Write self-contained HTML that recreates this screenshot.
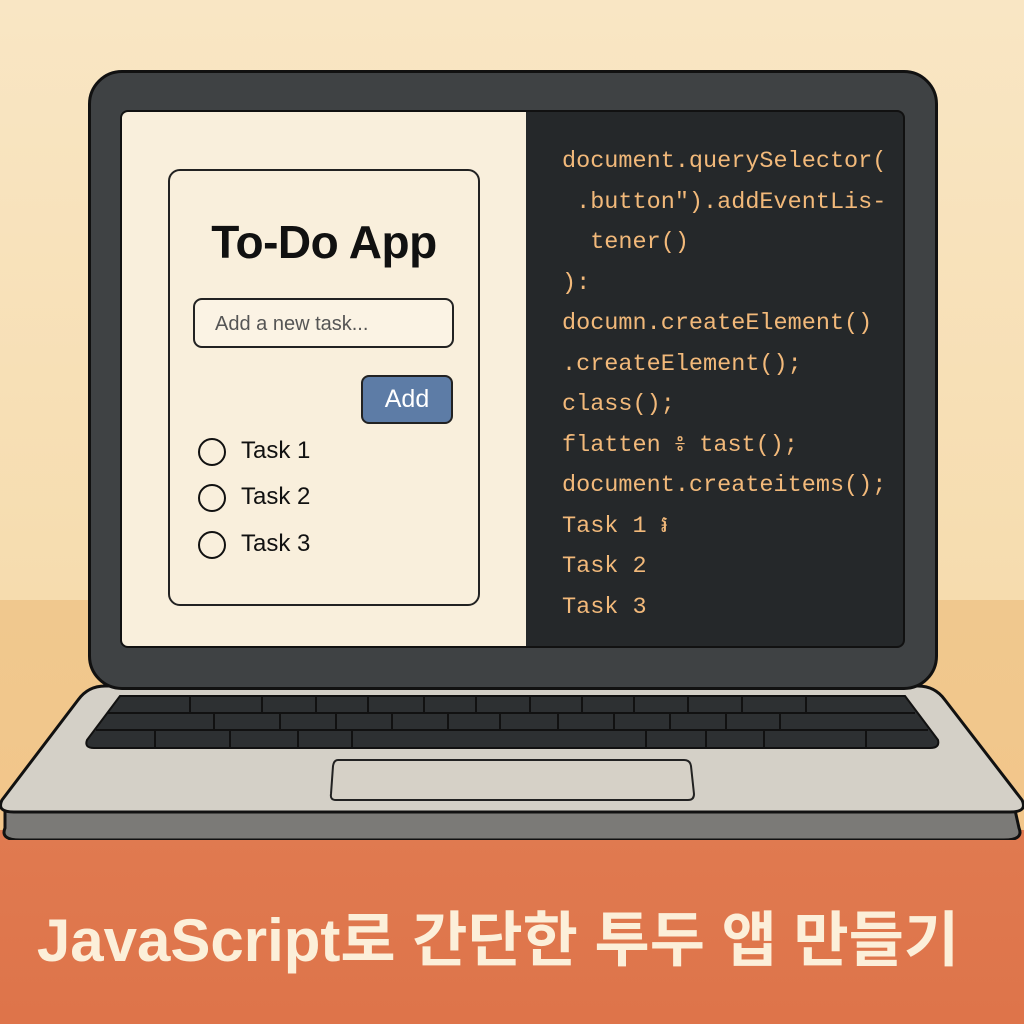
<!DOCTYPE html>
<html><head><meta charset="utf-8"><style>
body{margin:0;width:1024px;height:1024px;overflow:hidden;position:relative;background:linear-gradient(#f9e6c4,#f6dcae 600px,#f0c88e 600px,#f2c68a 830px,#e07a50 830px,#de744a);font-family:"Liberation Sans",sans-serif}
.a{position:absolute}
.lid{left:88px;top:70px;width:850px;height:620px;background:#3f4244;border:3px solid #111;border-radius:34px;box-sizing:border-box}
.scr{left:120px;top:110px;width:785px;height:538px;border:2px solid #111;border-radius:8px;overflow:hidden;box-sizing:border-box;background:#25282a}
.lp{left:0;top:0;width:404px;height:100%;background:#f9efdc}
.card{left:46px;top:57px;width:312px;height:437px;border:2.5px solid #222;border-radius:12px;box-sizing:border-box}
.code{left:440px;font-family:"Liberation Mono",monospace;color:#f2b97a;font-size:23.5px;white-space:pre}
.c{width:24px;height:24px;border:2.5px solid #111;border-radius:50%;left:198px}
.t{left:241px;font-size:24px;color:#111}
</style></head><body>
<svg class="a" style="left:0;top:680px" width="1024" height="160">
<path d="M5 148 Q0 160 20 160 L1004 160 Q1024 160 1019 148 L1015 130 L5 130Z" fill="#7b7a77" stroke="#111" stroke-width="3"/>
<path d="M105 6 L918 6 Q935 6 945 20 L1022 120 Q1028 132 1010 132 L14 132 Q-4 132 2 120 L78 20 Q88 6 105 6Z" fill="#d4d0c7" stroke="#111" stroke-width="3"/>
<path d="M120 16 L905 16 L938 60 Q940 68 930 68 L94 68 Q84 68 87 60Z" fill="#2d3032" stroke="#111" stroke-width="2"/>
<g stroke="#111" stroke-width="2"><line x1="108" y1="33" x2="915" y2="33"/><line x1="96" y1="50" x2="928" y2="50"/>
<path d="M190 16v17M262 16v17M316 16v17M368 16v17M424 16v17M476 16v17M530 16v17M582 16v17M634 16v17M688 16v17M742 16v17M806 16v17
M214 33v17M280 33v17M336 33v17M392 33v17M448 33v17M500 33v17M558 33v17M614 33v17M670 33v17M726 33v17M780 33v17
M155 50v18M230 50v18M298 50v18M352 50v18M646 50v18M706 50v18M764 50v18M866 50v18"/></g>
<path d="M338 80 L684 80 Q690 80 691 86 L694 114 Q694 120 688 120 L336 120 Q330 120 331 114 L333 86 Q334 80 338 80Z" fill="#d6d1c7" stroke="#222" stroke-width="2"/>
</svg>
<div class="a lid"></div>
<div class="a scr"><div class="a lp"><div class="a card"></div></div>
<div class="a code" style="top:30px;line-height:40.5px">document.querySelector(
 .button").addEventLis-
  tener()
):
documn.createElement()
.createElement();
class();
flatten ៖ tast();
document.createitems();
Task 1 ៛
Task 2
Task 3</div></div>
<div class="a" style="left:168px;top:215px;width:312px;text-align:center;font-size:46px;font-weight:bold;color:#111;letter-spacing:-0.5px">To-Do App</div>
<div class="a" style="left:193px;top:298px;width:261px;height:50px;border:2.5px solid #222;border-radius:9px;box-sizing:border-box;background:#fbf3e4;font-size:20px;color:#555;padding:13px 0 0 20px">Add a new task...</div>
<div class="a" style="left:361px;top:375px;width:92px;height:49px;border:2.5px solid #222;border-radius:8px;box-sizing:border-box;background:#5d7ca6;color:#fff;font-size:25px;text-align:center;line-height:44px">Add</div>
<div class="a c" style="top:438px"></div><div class="a t" style="top:437px">Task 1</div>
<div class="a c" style="top:484px"></div><div class="a t" style="top:483px">Task 2</div>
<div class="a c" style="top:531px"></div><div class="a t" style="top:530px">Task 3</div>
<div class="a" style="left:0;top:892px;width:996px;text-align:center;font-family:'Liberation Sans','Noto Sans CJK KR',sans-serif;font-weight:bold;font-size:60px;color:#fcefd9">JavaScript로 간단한 투두 앱 만들기</div>
</body></html>
